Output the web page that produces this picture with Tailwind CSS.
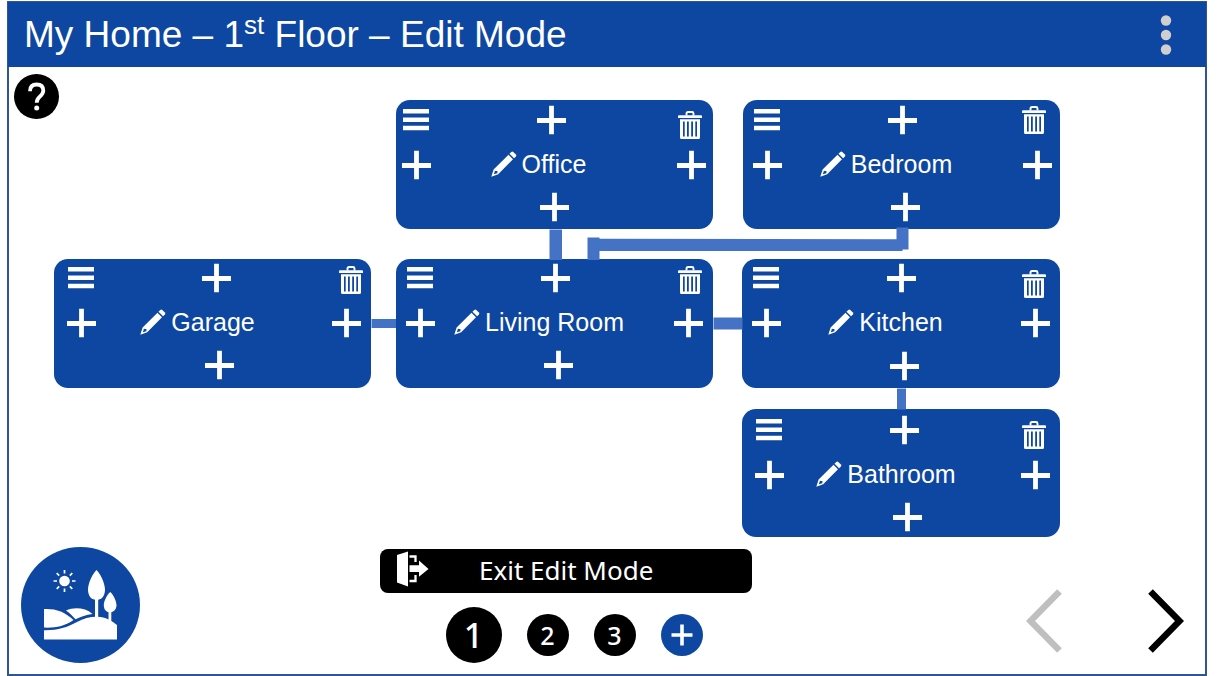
<!DOCTYPE html>
<html lang="en">
<head>
<meta charset="utf-8">
<meta name="viewport" content="width=device-width, initial-scale=1">
<title>My Home – Edit Mode</title>
<script src="https://cdn.jsdelivr.net/npm/@tailwindcss/browser@4"></script>
</head>
<body class="bg-white pt-px pr-[13px] pl-[7px] font-['Liberation_Sans',Arial,sans-serif]">
<svg class="hidden" aria-hidden="true">
  <symbol id="plus" viewBox="0 0 30 30"><path d="M15.500 .7V29.3M1 15.500H30" stroke="#fff" stroke-width="4.8"/></symbol>
  <symbol id="menu" viewBox="0 0 30 30"><path d="M2 6.200H28M2 14.700H28M2 23H28" stroke="#fff" stroke-width="4.4"/></symbol>
  <symbol id="trash" viewBox="0 0 24 28">
    <path d="M8.500 4.5V2.400Q8.500 1 10 1H14Q15.500 1 15.500 2.400V4.5" fill="none" stroke="#fff" stroke-width="1.9"/>
    <path d="M1 4.2H23Q24 4.2 24 5.2V7H0V5.2Q0 4.2 1 4.2Z" fill="#fff"/>
    <path fill-rule="evenodd" d="M2 8.3H22V26.5Q22 28 20.5 28H3.500Q2 28 2 26.500ZM5 10.500V25.500H6.700V10.500ZM9 10.500V25.500H10.800V10.500ZM13.200 10.500V25.500H15V10.500ZM17.300 10.500V25.500H19V10.500Z" fill="#fff"/>
  </symbol>
  <symbol id="pencil" viewBox="0 0 26 26">
    <path fill-rule="evenodd" d="M.3 25.700L2.600 18.600L17.500 3.700L22 8.200L7.200 23.200ZM3.900 19.800L2.900 23.200L6.300 22.200L6.600 20.200Z" fill="#fff"/>
    <path d="M18.500 2.700L20.300.9Q21.300 .1 22.300 1L24.900 3.600Q25.700 4.600 24.900 5.600L23.100 7.300Z" fill="#fff"/>
  </symbol>
</svg>

<div class="flex min-h-[calc(100vh-1px)] flex-col border-2 border-[#2f5597]">
  <header class="-mx-px -mt-px flex h-[65px] shrink-0 items-center justify-between bg-[#0d47a1] pr-[34px] pl-4 text-white">
    <h1 class="text-[37px] leading-[44px]">My Home – 1<sup class="text-[26px]">st</sup> Floor – Edit Mode</h1>
    <button type="button" aria-label="More options" class="h-10 w-3">
      <svg class="h-10 w-3" viewBox="0 0 12 40" fill="#d0cece"><circle cx="6" cy="5.500" r="5.200"/><circle cx="6" cy="20" r="5.200"/><circle cx="6" cy="34.500" r="5.200"/></svg>
    </button>
  </header>

  <main class="relative min-h-[479px] flex-1 px-[5px] pt-[7px]">
    <button type="button" aria-label="Help" class="size-[45px] rounded-full bg-black">
      <svg class="size-[45px]" viewBox="0 0 45 45"><path d="M16 17.200Q16 10.500 22.600 10.500Q29.300 10.500 29.300 16.800Q29.300 19.500 25.800 22.700Q22.700 25.500 22.700 28.800" fill="none" stroke="#fff" stroke-width="3.800"/><circle cx="22.700" cy="34" r="2.500" fill="#fff"/></svg>
    </button>

    <!-- Floor plan: rooms placed on a free canvas -->
    <section aria-label="Garage" class="absolute top-[192px] left-[45px] flex h-[129px] w-[317px] flex-col rounded-[14px] bg-[#0d47a1] pt-1 pr-[10px] pl-3">
      <div class="flex h-[30px]">
        <button type="button" aria-label="Garage menu" class="size-[30px]"><svg class="size-[30px]"><use href="#menu"/></svg></button>
        <button type="button" aria-label="Add above Garage" class="ml-[105px] size-[30px]"><svg class="size-[30px]"><use href="#plus"/></svg></button>
        <button type="button" aria-label="Delete Garage" class="-mr-0.5 mt-[3px] ml-auto h-7 w-6"><svg class="h-7 w-6"><use href="#trash"/></svg></button>
      </div>
      <div class="flex h-[60px] items-center">
        <button type="button" aria-label="Add left of Garage" class="size-[30px]"><svg class="size-[30px]"><use href="#plus"/></svg></button>
        <button type="button" class="flex flex-1 items-center justify-center gap-[5px] pr-8 pb-0.5 text-[25px] leading-[30px] text-white"><svg class="size-[26px]"><use href="#pencil"/></svg>Garage</button>
        <button type="button" aria-label="Add right of Garage" class="size-[30px]"><svg class="size-[30px]"><use href="#plus"/></svg></button>
      </div>
      <button type="button" aria-label="Add below Garage" class="-mt-[3px] ml-[138px] size-[30px]"><svg class="size-[30px]"><use href="#plus"/></svg></button>
    </section>

    <section aria-label="Office" class="absolute top-[33px] left-[387px] flex h-[129px] w-[317px] flex-col rounded-[14px] bg-[#0d47a1] pt-[5px] pr-[7px] pl-[5px]">
      <div class="flex h-[30px]">
        <button type="button" aria-label="Office menu" class="size-[30px]"><svg class="size-[30px]"><use href="#menu"/></svg></button>
        <button type="button" aria-label="Add above Office" class="ml-[105px] size-[30px]"><svg class="size-[30px]"><use href="#plus"/></svg></button>
        <button type="button" aria-label="Delete Office" class="mt-1.5 mr-1 ml-auto h-7 w-6"><svg class="h-7 w-6"><use href="#trash"/></svg></button>
      </div>
      <div class="flex h-[60px] items-center">
        <button type="button" aria-label="Add left of Office" class="size-[30px]"><svg class="size-[30px]"><use href="#plus"/></svg></button>
        <button type="button" class="flex flex-1 items-center justify-center gap-[5px] pr-[30px] pb-0.5 text-[25px] leading-[30px] text-white"><svg class="size-[26px]"><use href="#pencil"/></svg>Office</button>
        <button type="button" aria-label="Add right of Office" class="size-[30px]"><svg class="size-[30px]"><use href="#plus"/></svg></button>
      </div>
      <button type="button" aria-label="Add below Office" class="-mt-[3px] ml-[138px] size-[30px]"><svg class="size-[30px]"><use href="#plus"/></svg></button>
    </section>

    <section aria-label="Bedroom" class="absolute top-[33px] left-[734px] flex h-[129px] w-[317px] flex-col rounded-[14px] bg-[#0d47a1] pt-[5px] pr-2 pl-[9px]">
      <div class="flex h-[30px]">
        <button type="button" aria-label="Bedroom menu" class="size-[30px]"><svg class="size-[30px]"><use href="#menu"/></svg></button>
        <button type="button" aria-label="Add above Bedroom" class="ml-[105px] size-[30px]"><svg class="size-[30px]"><use href="#plus"/></svg></button>
        <button type="button" aria-label="Delete Bedroom" class="mt-px mr-1.5 ml-auto h-7 w-6"><svg class="h-7 w-6"><use href="#trash"/></svg></button>
      </div>
      <div class="flex h-[60px] items-center">
        <button type="button" aria-label="Add left of Bedroom" class="size-[30px]"><svg class="size-[30px]"><use href="#plus"/></svg></button>
        <button type="button" class="flex flex-1 items-center justify-center gap-[5px] pr-8 pb-0.5 text-[25px] leading-[30px] text-white"><svg class="size-[26px]"><use href="#pencil"/></svg>Bedroom</button>
        <button type="button" aria-label="Add right of Bedroom" class="size-[30px]"><svg class="size-[30px]"><use href="#plus"/></svg></button>
      </div>
      <button type="button" aria-label="Add below Bedroom" class="-mt-[3px] ml-[138px] size-[30px]"><svg class="size-[30px]"><use href="#plus"/></svg></button>
    </section>

    <section aria-label="Living Room" class="absolute top-[192px] left-[387px] flex h-[129px] w-[317px] flex-col rounded-[14px] bg-[#0d47a1] pt-1 pr-[10px] pl-[9px]">
      <div class="flex h-[30px]">
        <button type="button" aria-label="Living Room menu" class="size-[30px]"><svg class="size-[30px]"><use href="#menu"/></svg></button>
        <button type="button" aria-label="Add above Living Room" class="ml-[105px] size-[30px]"><svg class="size-[30px]"><use href="#plus"/></svg></button>
        <button type="button" aria-label="Delete Living Room" class="mt-[3px] mr-px ml-auto h-7 w-6"><svg class="h-7 w-6"><use href="#trash"/></svg></button>
      </div>
      <div class="flex h-[60px] items-center">
        <button type="button" aria-label="Add left of Living Room" class="size-[30px]"><svg class="size-[30px]"><use href="#plus"/></svg></button>
        <button type="button" class="flex flex-1 items-center justify-center gap-[5px] pr-[30px] pb-0.5 text-[25px] leading-[30px] text-white"><svg class="size-[26px]"><use href="#pencil"/></svg>Living Room</button>
        <button type="button" aria-label="Add right of Living Room" class="size-[30px]"><svg class="size-[30px]"><use href="#plus"/></svg></button>
      </div>
      <button type="button" aria-label="Add below Living Room" class="-mt-[3px] ml-[138px] size-[30px]"><svg class="size-[30px]"><use href="#plus"/></svg></button>
    </section>

    <section aria-label="Kitchen" class="absolute top-[192px] left-[733px] flex h-[129px] w-[318px] flex-col rounded-[14px] bg-[#0d47a1] pt-1 pr-[10px] pl-[9px]">
      <div class="flex h-[30px]">
        <button type="button" aria-label="Kitchen menu" class="size-[30px]"><svg class="size-[30px]"><use href="#menu"/></svg></button>
        <button type="button" aria-label="Add above Kitchen" class="ml-[105px] size-[30px]"><svg class="size-[30px]"><use href="#plus"/></svg></button>
        <button type="button" aria-label="Delete Kitchen" class="mt-[7px] mr-1 ml-auto h-7 w-6"><svg class="h-7 w-6"><use href="#trash"/></svg></button>
      </div>
      <div class="flex h-[60px] items-center">
        <button type="button" aria-label="Add left of Kitchen" class="size-[30px]"><svg class="size-[30px]"><use href="#plus"/></svg></button>
        <button type="button" class="flex flex-1 items-center justify-center gap-[5px] pr-[30px] pb-0.5 text-[25px] leading-[30px] text-white"><svg class="size-[26px]"><use href="#pencil"/></svg>Kitchen</button>
        <button type="button" aria-label="Add right of Kitchen" class="size-[30px]"><svg class="size-[30px]"><use href="#plus"/></svg></button>
      </div>
      <button type="button" aria-label="Add below Kitchen" class="-mt-0.5 ml-[138px] size-[30px]"><svg class="size-[30px]"><use href="#plus"/></svg></button>
    </section>

    <section aria-label="Bathroom" class="absolute top-[342px] left-[733px] flex h-[128px] w-[318px] flex-col rounded-[14px] bg-[#0d47a1] pt-1.5 pr-[10px] pl-3">
      <div class="flex h-[30px]">
        <button type="button" aria-label="Bathroom menu" class="size-[30px]"><svg class="size-[30px]"><use href="#menu"/></svg></button>
        <button type="button" aria-label="Add above Bathroom" class="ml-[105px] size-[30px]"><svg class="size-[30px]"><use href="#plus"/></svg></button>
        <button type="button" aria-label="Delete Bathroom" class="mt-1.5 mr-1 ml-auto h-7 w-6"><svg class="h-7 w-6"><use href="#trash"/></svg></button>
      </div>
      <div class="flex h-[60px] items-center">
        <button type="button" aria-label="Add left of Bathroom" class="size-[30px]"><svg class="size-[30px]"><use href="#plus"/></svg></button>
        <button type="button" class="flex flex-1 items-center justify-center gap-[5px] pr-8 pb-0.5 text-[25px] leading-[30px] text-white"><svg class="size-[26px]"><use href="#pencil"/></svg>Bathroom</button>
        <button type="button" aria-label="Add right of Bathroom" class="size-[30px]"><svg class="size-[30px]"><use href="#plus"/></svg></button>
      </div>
      <button type="button" aria-label="Add below Bathroom" class="-mt-[3px] ml-[138px] size-[30px]"><svg class="size-[30px]"><use href="#plus"/></svg></button>
    </section>

    <!-- Connections between rooms -->
    <svg class="pointer-events-none absolute top-0 left-0 h-[480px] w-[1060px]" viewBox="0 0 1060 480" fill="#4472c4" aria-hidden="true">
      <path d="M540.500 162.500H553V193H540.500Z"/>
      <path d="M578.500 170.500H590.500V171.700L887.500 172.200V160.500H899.500V182.500H893.500V184H590.500V193H578.500Z"/>
      <path d="M362.500 252H387V261H362.500Z"/>
      <path d="M704.500 250.500H733.500V262.500H704.500Z"/>
      <path d="M888 321.500H897V342.500H888Z"/>
    </svg>
  </main>

  <footer class="flex shrink-0 items-start justify-between pr-[21px] pb-[11px] pl-3">
    <button type="button" aria-label="Outdoor areas" class="h-[116px] w-[119px] rounded-[50%] bg-[#0d47a1]">
      <svg class="h-[116px] w-[119px]" viewBox="0 0 119 116" fill="#fff">
        <circle cx="43.500" cy="34" r="5.300"/>
        <path d="M43.500 23V26.500M43.500 41.500V45M32.500 34H36M51 34H54.500M35.700 26.200L38.200 28.700M48.800 39.300L51.300 41.800M51.300 26.200L48.800 28.700M38.200 39.300L35.700 41.800" stroke="#fff" stroke-width="1.700"/>
        <path d="M75.500 23C79 26 84 36 84 42.500C84 48 81.500 52 77.200 52.800V70.500H74V52.800C69.500 52 67 48 67 42.500C67 36 72 26 75.500 23Z"/>
        <path d="M89.200 45C92 47 95.500 54 95.500 58C95.500 61.500 93.500 64.500 90.300 65.200V74H87.500V65.200C84.500 64.500 82.800 61.500 82.800 58C82.800 54 86.500 47 89.200 45Z"/>
        <path d="M23 62C35 61.500 43 64.500 52.500 73C44 79 35 81 23 80.600Z"/>
        <path d="M45 63.500C53 60 64 60.500 71.500 67C65 68 60 69.500 54.500 72.300C51 68.500 49 66 45 63.500Z"/>
        <path d="M23 83.200C36 83.500 46 80.500 56 75C68 68.500 82 67.500 92 75L96 78V92.500H23Z"/>
      </svg>
    </button>

    <div class="mr-[34px] pt-0.5">
      <button type="button" class="flex h-11 w-[372px] items-center rounded-lg bg-black pb-1 pl-[17px] text-white">
        <svg class="h-9 w-8" viewBox="0 0 32 36" fill="#fff"><path d="M0 4L11 .500V35.500L0 31.500Z"/><path d="M12.500 5.500H18.500V11M12.500 30H18.500V24" fill="none" stroke="#fff" stroke-width="2.300"/><path d="M12.500 14.300H22V9.500L31.500 18L22 25.800V21H12.500Z"/></svg>
        <span class="ml-[50px] pt-0.5 font-['Noto_Sans','Open_Sans',sans-serif] text-[26px] leading-[34px]">Exit Edit Mode</span>
      </button>
      <nav aria-label="Floors" class="mt-3.5 flex items-center justify-center gap-[25px] pl-4 font-['Noto_Sans','Open_Sans',sans-serif] font-medium text-white">
        <button type="button" class="size-14 rounded-full bg-black text-[34px] leading-[50px]">1</button>
        <button type="button" class="size-[42px] rounded-full bg-black text-[25px] leading-[40px]">2</button>
        <button type="button" class="size-[42px] rounded-full bg-black text-[25px] leading-[40px]">3</button>
        <button type="button" aria-label="Add floor" class="flex size-[42px] items-center justify-center rounded-full bg-[#0d47a1]"><svg class="size-[22px]" viewBox="0 0 22 22"><path d="M11 .500V21.500M.500 11H21.500" stroke="#fff" stroke-width="3.600"/></svg></button>
      </nav>
    </div>

    <div class="flex gap-[86px] pt-[42px]">
      <button type="button" aria-label="Previous floor" class="h-16 w-9"><svg class="h-16 w-9" viewBox="0 0 36 64"><path d="M33.500 2.500L4.500 32L33.500 61.500" fill="none" stroke="#bfbfbf" stroke-width="6.500"/></svg></button>
      <button type="button" aria-label="Next floor" class="h-16 w-9"><svg class="h-16 w-9" viewBox="0 0 36 64"><path d="M2.500 2.500L31.500 32L2.500 61.500" fill="none" stroke="#000" stroke-width="6.500"/></svg></button>
    </div>
  </footer>
</div>
</body>
</html>
